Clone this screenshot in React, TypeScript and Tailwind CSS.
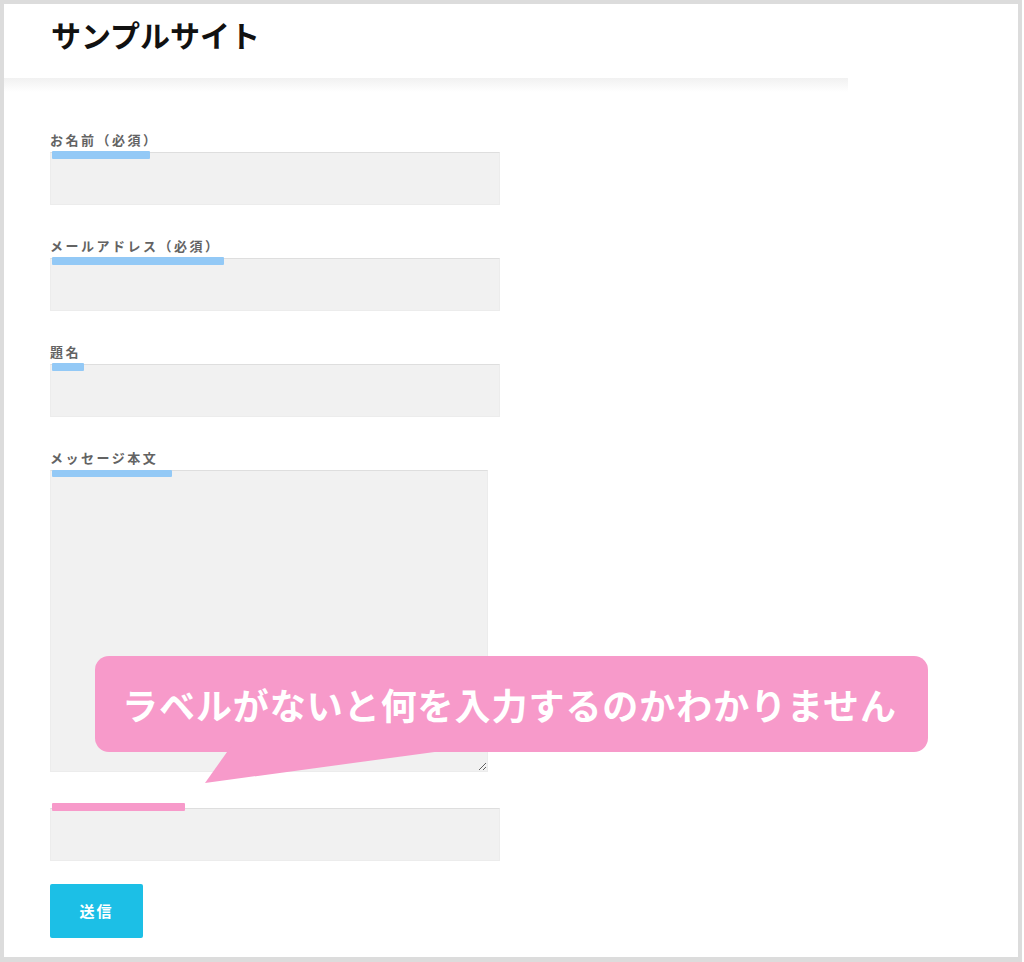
const fields = [
  { label: "お名前（必須）", bar: 98, bar_color: "bg-[#93c9f6]" },
  { label: "メールアドレス（必須）", bar: 172, bar_color: "bg-[#93c9f6]" },
  { label: "題名", bar: 32, bar_color: "bg-[#93c9f6]" },
];

const font = { fontFamily: '"Noto Sans CJK JP", "Noto Sans", sans-serif' };

const App = () => {
  return (
    <div
      className="relative w-[1022px] h-[962px] border-4 border-b-[5px] border-[#dcdcdc] bg-white overflow-hidden"
      style={font}
    >
      <header className="w-[844px] h-[74px] pl-[47px] pt-[11px]">
        <h1 className="text-[30px] leading-[38px] font-bold text-[#111]">サンプルサイト</h1>
      </header>
      <div className="w-[844px] h-[14px] bg-gradient-to-b from-[#f1f1f1] to-white" />

      <form className="pl-[46px] pt-[40px]" onSubmit={e => e.preventDefault()}>
        {fields.map(f => (
          <div key={f.label} className="mb-[33px]">
            <label className="block text-[13px] leading-4 font-bold tracking-[2.5px] text-[#636363] mb-1">{f.label}</label>
            <div className="relative w-[450px]">
              <input type="text" className="block w-full h-[53px] bg-[#f1f1f1] border border-[#ececec] border-t-[#dedede] outline-none" />
              <span className={`absolute left-[2px] -top-[1px] h-[8px] rounded-[1px] ${f.bar_color}`} style={{ width: f.bar }} />
            </div>
          </div>
        ))}

        <div>
          <label className="block text-[13px] leading-4 font-bold tracking-[2.5px] text-[#636363] mb-1">メッセージ本文</label>
          <div className="relative w-[438px]">
            <textarea className="block w-full h-[302px] bg-[#f1f1f1] border border-[#ececec] border-t-[#dedede] outline-none" />
            <span className="absolute left-[2px] top-0 h-[7px] w-[120px] rounded-[1px] bg-[#93c9f6]" />
          </div>
        </div>

        <div className="relative w-[450px] mt-[36px]">
          <input type="text" className="block w-full h-[53px] bg-[#f1f1f1] border border-[#ececec] border-t-[#dedede] outline-none" />
          <span className="absolute left-[2px] -top-[5px] h-[8px] w-[133px] rounded-[1px] bg-[#f79aca]" />
        </div>

        <button
          type="submit"
          className="mt-[23px] w-[93px] h-[54px] rounded-[2px] bg-[#1cbfe6] text-white text-[15px] font-bold tracking-[2px]"
        >
          送信
        </button>
      </form>

      {/* annotation balloon */}
      <div className="absolute left-[91px] top-[652px] w-[833px] h-[96px] rounded-[14px] bg-[#f79aca] flex items-center pl-[27px]">
        <p className="text-[36px] leading-none font-bold text-white tracking-[0.95px] whitespace-nowrap">
          ラベルがないと何を入力するのかわかりません
        </p>
      </div>
      <svg className="absolute left-[196px] top-[741px]" width="250" height="42" viewBox="0 0 250 42">
        <polygon points="32,0 242,0 242,6 5,38" fill="#f79aca" />
      </svg>
    </div>
  );
};

export default App;
